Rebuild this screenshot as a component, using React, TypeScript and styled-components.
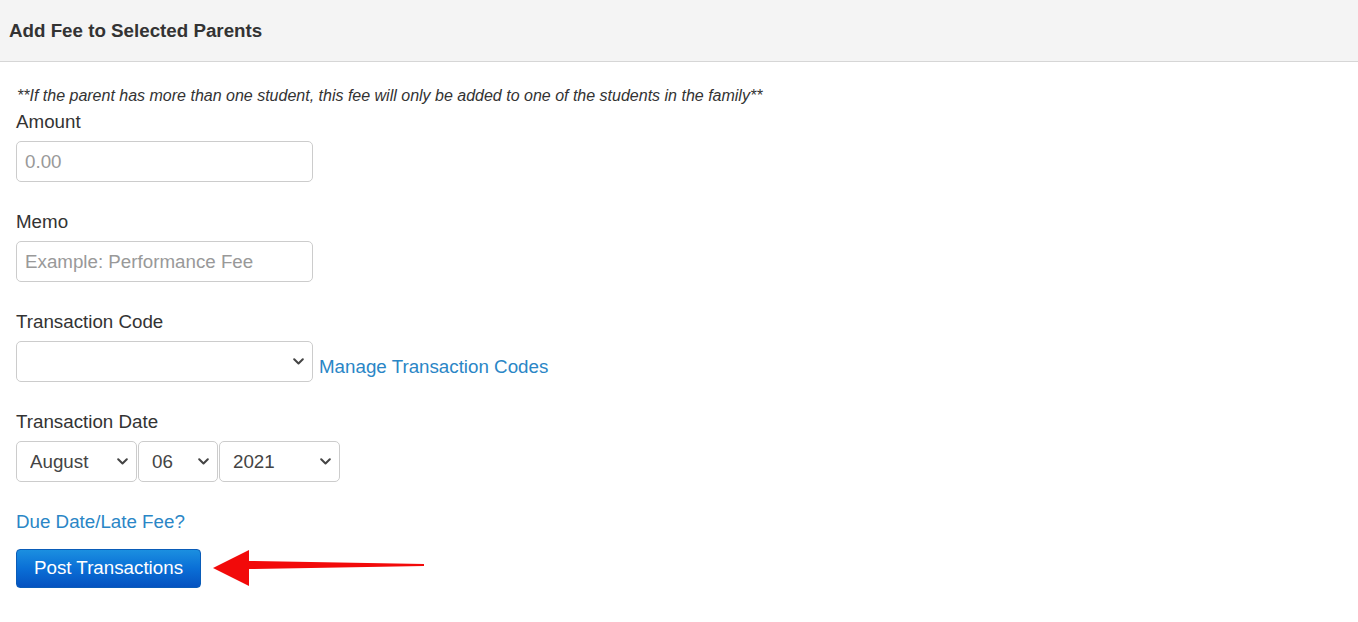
import React from "react";
import styled, { createGlobalStyle } from "styled-components";

const Global = createGlobalStyle`
  html, body { margin: 0; padding: 0; background: #fff; }
  body {
    font-family: "Liberation Sans", Arial, Helvetica, sans-serif;
    color: #333;
  }
  * { box-sizing: border-box; }
`;

const Panel = styled.div`
  width: 1358px;
  min-height: 622px;
  background: #fff;
`;

const Header = styled.div`
  height: 62px;
  background: #f4f4f4;
  border-bottom: 1px solid #d6d6d6;
  display: flex;
  align-items: center;
  padding: 0 0 0 9px;
`;

const Title = styled.h3`
  margin: 0;
  font-size: 18.75px;
  font-weight: bold;
  color: #333;
  line-height: 22px;
`;

const Body = styled.div`
  padding: 23px 16px 0 16px;
  display: flex;
  flex-direction: column;
  align-items: flex-start;
`;

const Note = styled.div`
  font-style: italic;
  font-size: 16px;
  line-height: 22px;
  margin-left: 1px;
`;

const Group = styled.div`
  display: flex;
  flex-direction: column;
  align-items: flex-start;
  margin-bottom: 25px;
`;

const Label = styled.label`
  font-size: 18.75px;
  line-height: 26px;
  padding-top: 2px;
  margin-bottom: 6px;
  color: #333;
`;

const TextInput = styled.input`
  width: 297px;
  height: 41px;
  border: 1px solid #ccc;
  border-radius: 5px;
  padding: 0 8px;
  font-family: inherit;
  font-size: 18.75px;
  color: #555;
  outline: none;
  &::placeholder { color: #999; }
`;

const Row = styled.div`
  display: flex;
  align-items: center;
  gap: 1px;
`;

const SelectWrap = styled.div<{ $w: number }>`
  position: relative;
  width: ${(p) => p.$w}px;
  height: 41px;
`;

const Select = styled.select`
  appearance: none;
  -webkit-appearance: none;
  width: 100%;
  height: 100%;
  border: 1px solid #ccc;
  border-radius: 5px;
  background: #fff;
  padding: 0 28px 0 13px;
  font-family: inherit;
  font-size: 18.75px;
  color: #444;
  outline: none;
`;

const Chevron = styled.svg`
  position: absolute;
  right: 9px;
  top: 50%;
  margin-top: -4px;
  width: 11px;
  height: 7px;
  pointer-events: none;
`;

const Link = styled.a`
  color: #2a86c6;
  font-size: 18.75px;
  text-decoration: none;
  cursor: pointer;
`;

const SideLink = styled(Link)`
  margin-left: 5px;
  margin-top: 11px;
`;

const DueLink = styled(Link)`
  line-height: 26px;
  margin-top: 2px;
  margin-bottom: 13px;
`;

const ActionRow = styled.div`
  display: flex;
  align-items: center;
`;

const PostButton = styled.button`
  width: 185px;
  height: 39px;
  border: 1px solid #0a5cb8;
  border-radius: 4px;
  background: linear-gradient(to bottom, #1b8fe0 0%, #0a6fd6 50%, #0552c0 100%);
  color: #fff;
  font-family: inherit;
  font-size: 18.75px;
  cursor: pointer;
  padding: 0;
`;

const Arrow = styled.svg`
  margin-left: 8px;
  width: 216px;
  height: 40px;
`;

const Caret = () => (
  <Chevron viewBox="0 0 11 7">
    <path d="M1.2 1.2 L5.5 5.5 L9.8 1.2" fill="none" stroke="#444" strokeWidth="2" strokeLinecap="round" strokeLinejoin="round" />
  </Chevron>
);

const DropDown = ({ w, value, options }: { w: number; value: string; options: string[] }) => (
  <SelectWrap $w={w}>
    <Select defaultValue={value}>
      {options.map((o) => (
        <option key={o} value={o}>{o}</option>
      ))}
    </Select>
    <Caret />
  </SelectWrap>
);

export default function App() {
  return (
    <Panel>
      <Global />
      <Header>
        <Title>Add Fee to Selected Parents</Title>
      </Header>
      <Body>
        <Note>**If the parent has more than one student, this fee will only be added to one of the students in the family**</Note>
        <Group>
          <Label>Amount</Label>
          <TextInput placeholder="0.00" />
        </Group>
        <Group>
          <Label>Memo</Label>
          <TextInput placeholder="Example: Performance Fee" />
        </Group>
        <Group>
          <Label>Transaction Code</Label>
          <Row>
            <DropDown w={297} value="" options={[""]} />
            <SideLink>Manage Transaction Codes</SideLink>
          </Row>
        </Group>
        <Group>
          <Label>Transaction Date</Label>
          <Row>
            <DropDown w={121} value="August" options={["January","February","March","April","May","June","July","August","September","October","November","December"]} />
            <DropDown w={80} value="06" options={["01","02","03","04","05","06","07","08","09","10"]} />
            <DropDown w={121} value="2021" options={["2020","2021","2022"]} />
          </Row>
        </Group>
        <DueLink>Due Date/Late Fee?</DueLink>
        <ActionRow>
          <PostButton>Post Transactions</PostButton>
          <Arrow viewBox="0 0 216 40">
            <path d="M4 20 L40 2 L40 13 L215 16 L215 18 L40 21 L40 38 Z" fill="#f20a0a" />
          </Arrow>
        </ActionRow>
      </Body>
    </Panel>
  );
}
